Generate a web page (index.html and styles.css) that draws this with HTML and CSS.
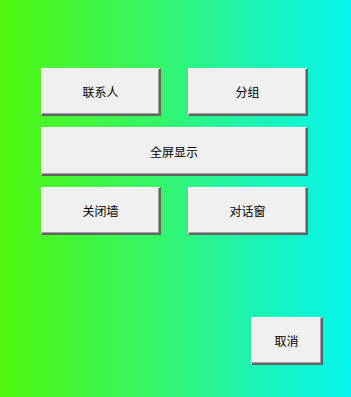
FILE: index.html
```html
<!DOCTYPE html>
<html lang="zh">
<head>
<meta charset="utf-8">
<link rel="stylesheet" href="styles.css">
</head>
<body>
<div class="window">
  <div class="grid">
    <button class="btn">联系人</button>
    <button class="btn">分组</button>
    <button class="btn wide">全屏显示</button>
    <button class="btn">关闭墙</button>
    <button class="btn">对话窗</button>
  </div>
  <div class="footer">
    <button class="btn cancel">取消</button>
  </div>
</div>
</body>
</html>
```
FILE: styles.css
```css
html, body {
  margin: 0;
  padding: 0;
}
body {
  width: 351px;
  height: 397px;
  overflow: hidden;
  font-family: "Noto Sans CJK SC", "Noto Sans", sans-serif;
}
.window {
  box-sizing: border-box;
  width: 351px;
  height: 397px;
  padding: 68px 28px 0 41px;
  background: linear-gradient(to right, #50f70c 0%, #34f56a 45%, #1ef3ad 70%, #04f5ef 100%);
}
.grid {
  display: grid;
  grid-template-columns: 120px 120px;
  grid-template-rows: 48px 49px 48px;
  column-gap: 27px;
  row-gap: 11px;
}
.btn {
  box-sizing: border-box;
  margin: 0;
  padding: 1px 0 0 0;
  background: #f0f0f0;
  border-style: solid;
  border-width: 1px 2px 2px 1px;
  border-color: #ffffff #646464 #646464 #ffffff;
  box-shadow: inset -1px -1px 0 #a0a0a0;
  font-family: "Noto Sans CJK SC", "Noto Sans", sans-serif;
  font-size: 12px;
  color: #000;
  line-height: 1;
}
.wide {
  grid-column: 1 / span 2;
}
.footer {
  display: flex;
  justify-content: flex-end;
  margin-top: 82px;
}
.cancel {
  width: 72px;
  height: 48px;
}
```
